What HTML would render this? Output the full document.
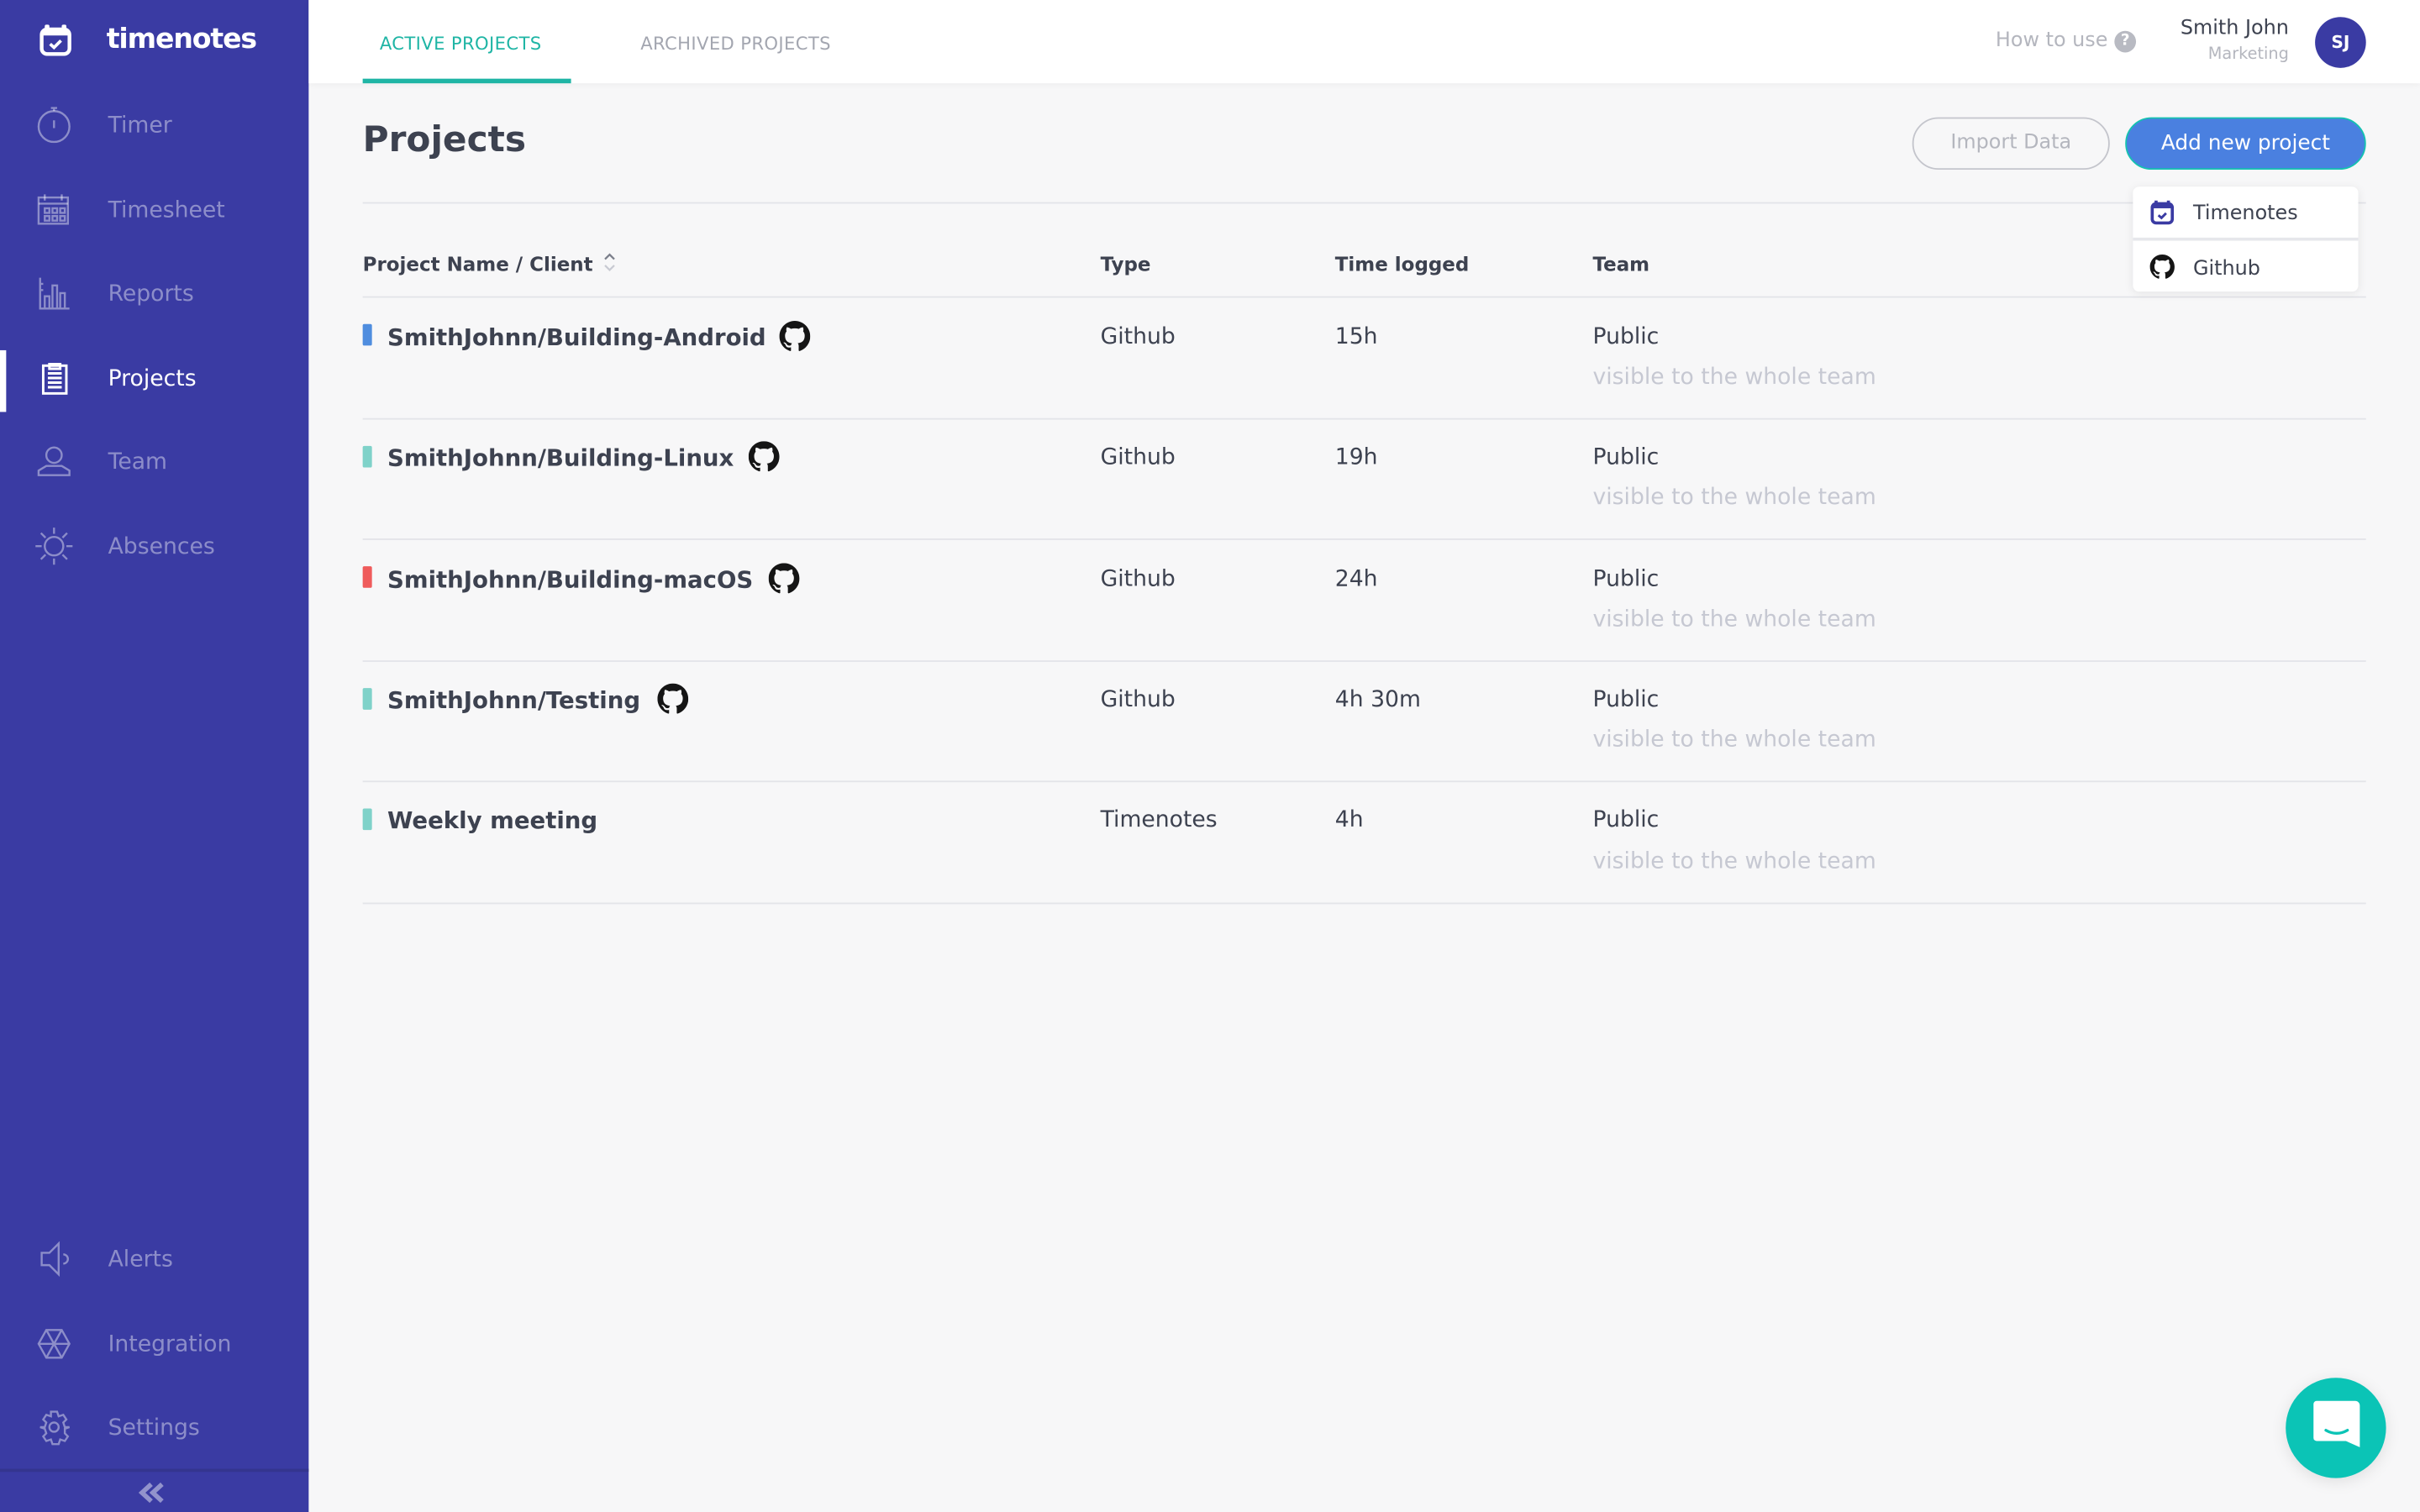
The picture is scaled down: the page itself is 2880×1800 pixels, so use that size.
<!DOCTYPE html>
<html><head><meta charset="utf-8"><style>
*{margin:0;padding:0;box-sizing:border-box}
html,body{width:2880px;height:1800px;overflow:hidden;background:#f7f7f8}
#w{position:absolute;left:0;top:0;width:1568px;height:980px;transform:scale(1.836735);transform-origin:0 0;font-family:"DejaVu Sans","Liberation Sans",sans-serif;color:#3d4250}
.a{position:absolute;white-space:nowrap}
#sb{position:absolute;left:0;top:0;width:200px;height:980px;background:#3a3ba3}
.nav{position:absolute;left:70px;font-size:14.5px;color:rgba(255,255,255,.42);transform:translateY(-45%)}
.ic{position:absolute;left:22px;width:26px;height:26px;transform:translateY(-50%)}
.ic *{stroke:rgba(255,255,255,.42);fill:none;stroke-width:1.3}
#top{position:absolute;left:200px;top:0;width:1368px;height:54px;background:#fff;box-shadow:0 1px 4px rgba(0,0,0,.05)}
.hd{font-size:12.5px;font-weight:bold;color:#3d4250;transform:translateY(-50%)}
.c{font-size:14.5px;transform:translateY(-45%)}
.nm{font-weight:bold;font-size:15px}
.sub{color:#c6c8d2}
.ln{position:absolute;left:235px;width:1298px;height:1px;background:#e3e4e9}
.bar{position:absolute;left:235px;width:6px;height:14px;border-radius:1px}
.gh{position:absolute;width:20px;height:20px}
</style></head><body><div id="w">
<div id="sb">
 <svg class="a" style="left:25px;top:15px" width="22" height="22" viewBox="0 0 22 22"><rect x="2" y="4" width="18" height="16" rx="3.5" fill="none" stroke="#fff" stroke-width="2.4"/><rect x="4" y="1" width="3" height="4" rx="1" fill="#fff"/><rect x="15" y="1" width="3" height="4" rx="1" fill="#fff"/><rect x="3" y="4" width="16" height="4" fill="#fff"/><path d="M7.5 13.5l2.5 2.3 4.5-4.5" stroke="#fff" stroke-width="2" fill="none"/></svg>
 <div class="a" style="left:69px;top:15px;font-size:18px;font-weight:bold;color:#fff;letter-spacing:-.6px">timenotes</div>
 <svg class="ic" style="top:81px" viewBox="0 0 26 26"><circle cx="13" cy="14" r="10"/><path d="M11 2h4M13 2v2M13 10v5"/></svg><div class="nav" style="top:81px">Timer</div>
 <svg class="ic" style="top:136px" viewBox="0 0 26 26"><rect x="3" y="5" width="19" height="17"/><path d="M3 9h19M7 3v4M18 3v4M7 12h3v3H7zM12 12h3v3h-3zM17 12h3v3h-3zM7 17h3v3H7zM12 17h3v3h-3zM17 17h3v3h-3z"/></svg><div class="nav" style="top:136px">Timesheet</div>
 <svg class="ic" style="top:190px" viewBox="0 0 26 26"><path d="M4 3v20h19M7 23V15h3v8M12 23V8h3v15M17 23V13h3v10M4 7h2M4 11h2"/></svg><div class="nav" style="top:190px">Reports</div>
 <div class="a" style="left:0;top:227px;width:4px;height:40px;background:#fff"></div>
 <svg class="ic" style="top:245px" viewBox="0 0 26 26"><rect x="6" y="5" width="15" height="18" style="stroke:#fff;stroke-width:1.6"/><path d="M10 4h7v3h-7zM9 10h9M9 13h9M9 16h9M9 19h9" style="stroke:#fff;stroke-width:1.6"/></svg><div class="nav" style="top:245px;color:#fff">Projects</div>
 <svg class="ic" style="top:299px" viewBox="0 0 26 26"><circle cx="13" cy="9" r="5"/><path d="M3 22v-3l5-3h10l5 3v3z"/></svg><div class="nav" style="top:299px">Team</div>
 <svg class="ic" style="top:354px" viewBox="0 0 26 26"><circle cx="13" cy="13" r="6"/><path d="M13 1v4M13 21v4M1 13h4M21 13h4M4.5 4.5l3 3M18.5 18.5l3 3M4.5 21.5l3-3M18.5 7.5l3-3"/></svg><div class="nav" style="top:354px">Absences</div>
 <svg class="ic" style="top:816px" viewBox="0 0 26 26"><path d="M5 9h5l6-6v20l-6-6H5zM19 10a3 3 0 0 1 0 6"/></svg><div class="nav" style="top:816px">Alerts</div>
 <svg class="ic" style="top:871px" viewBox="0 0 26 26"><path d="M8 4h10l5 9-5 9H8l-5-9zM8 4l10 18M18 4L8 22M3 13h20"/></svg><div class="nav" style="top:871px">Integration</div>
 <svg class="ic" style="top:925px" viewBox="0 0 26 26"><circle cx="13" cy="13" r="3"/><path d="M11 3h4l1 3 3-1 2 3-2 2 1 3h3v0l-3 1 0 3 2 2-2 3-3-1-1 3h-4l-1-3-3 1-2-3 2-2-1-3-3-1v0h3l1-3-2-2 2-3 3 1z"/></svg><div class="nav" style="top:925px">Settings</div>
 <div class="a" style="left:0;top:952px;width:200px;height:2px;background:#34358f"></div>
 <svg class="a" style="left:89px;top:960px" width="19" height="15" viewBox="0 0 19 15"><path d="M9 2L3 7.5 9 13M16 2l-6 5.5 6 5.5" stroke="rgba(255,255,255,.45)" stroke-width="3" fill="none"/></svg>
</div>
<div id="top"></div>
<div class="a" style="left:246px;top:21px;font-size:11.5px;color:#1fb5a5;letter-spacing:.2px">ACTIVE PROJECTS</div>
<div class="a" style="left:235px;top:51px;width:135px;height:3px;background:#1fb5a5"></div>
<div class="a" style="left:415px;top:21px;font-size:11.5px;color:#a3a6b0;letter-spacing:.2px">ARCHIVED PROJECTS</div>
<div class="a" style="left:1293px;top:19px;font-size:13px;color:#b4b6be">How to use</div>
<div class="a" style="left:1370px;top:20px;width:14px;height:14px;border-radius:50%;background:#b8bac2;color:#fff;font-size:10px;font-weight:bold;text-align:center;line-height:14px">?</div>
<div class="a" style="left:1400px;top:11px;width:83px;text-align:right;font-size:13px;color:#3d4250">Smith John</div>
<div class="a" style="left:1400px;top:29px;width:83px;text-align:right;font-size:10.5px;color:#b4b6be">Marketing</div>
<div class="a" style="left:1500px;top:11px;width:33px;height:33px;border-radius:50%;background:#3a3ba3;color:#fff;font-size:11px;font-weight:bold;text-align:center;line-height:33px">SJ</div>

<div class="a" style="left:235px;top:78px;font-size:23px;font-weight:bold;color:#3d4250">Projects</div>
<div class="a" style="left:1239px;top:76px;width:128px;height:34px;border:1.5px solid #c4c5cc;border-radius:17px;font-size:13px;color:#b4b6be;text-align:center;line-height:32px">Import Data</div>
<div class="a" style="left:1377px;top:76px;width:156px;height:34px;border:1.5px solid #14c2b0;border-radius:17px;background:#4a80e0;font-size:13.5px;color:#fff;text-align:center;line-height:32px">Add new project</div>
<div class="ln" style="top:131px"></div>

<div class="a hd" style="left:235px;top:171px">Project Name / Client</div>
<svg class="a" style="left:390px;top:163px" width="10" height="14" viewBox="0 0 10 14"><path d="M2 5l3-3 3 3" stroke="#7a7e8a" fill="none" stroke-width="1.2"/><path d="M2 9l3 3 3-3" stroke="#c8cad2" fill="none" stroke-width="1.2"/></svg>
<div class="a hd" style="left:713px;top:171px">Type</div>
<div class="a hd" style="left:865px;top:171px">Time logged</div>
<div class="a hd" style="left:1032px;top:171px">Team</div>
<div class="ln" style="top:192px"></div>

<div class="a" style="left:1382px;top:121px;width:146px;height:68px;background:#fff;border-radius:4px;box-shadow:0 1px 6px rgba(0,0,0,.08)"></div>
<div class="a" style="left:1382px;top:154px;width:146px;height:2px;background:#e6e7eb"></div>
<svg class="a" style="left:1393px;top:129px" width="16" height="17" viewBox="0 0 16 17"><rect x="1.5" y="3" width="13" height="12.5" rx="2.5" fill="none" stroke="#3a3ba3" stroke-width="2"/><rect x="1.5" y="3" width="13" height="3" fill="#3a3ba3"/><rect x="3" y="1" width="2" height="3" fill="#3a3ba3"/><rect x="11" y="1" width="2" height="3" fill="#3a3ba3"/><path d="M5.5 10.5l2 1.7 3-3" stroke="#3a3ba3" stroke-width="1.6" fill="none"/></svg>
<div class="a" style="left:1421px;top:131px;font-size:13px;color:#3d4250">Timenotes</div>
<svg class="a" style="left:1393px;top:165px" width="16" height="16" viewBox="0 0 16 16"><use href="#g"/></svg>
<div class="a" style="left:1421px;top:167px;font-size:13px;color:#3d4250">Github</div>

<div class="bar" style="top:210px;background:#4f8ddf"></div>
<div class="a c nm" style="left:251px;top:218px">SmithJohnn/Building-Android</div>
<svg class="gh" style="left:505px;top:208px" viewBox="0 0 16 16"><use href="#g"/></svg>
<div class="a c" style="left:713px;top:218px">Github</div><div class="a c" style="left:865px;top:218px">15h</div><div class="a c" style="left:1032px;top:218px">Public</div><div class="a c sub" style="left:1032px;top:244px">visible to the whole team</div>
<div class="ln" style="top:271px"></div>

<div class="bar" style="top:289px;background:#7fd2c9"></div>
<div class="a c nm" style="left:251px;top:296px">SmithJohnn/Building-Linux</div>
<svg class="gh" style="left:485px;top:286px" viewBox="0 0 16 16"><use href="#g"/></svg>
<div class="a c" style="left:713px;top:296px">Github</div><div class="a c" style="left:865px;top:296px">19h</div><div class="a c" style="left:1032px;top:296px">Public</div><div class="a c sub" style="left:1032px;top:322px">visible to the whole team</div>
<div class="ln" style="top:349px"></div>

<div class="bar" style="top:367px;background:#ef5b5b"></div>
<div class="a c nm" style="left:251px;top:375px">SmithJohnn/Building-macOS</div>
<svg class="gh" style="left:498px;top:365px" viewBox="0 0 16 16"><use href="#g"/></svg>
<div class="a c" style="left:713px;top:375px">Github</div><div class="a c" style="left:865px;top:375px">24h</div><div class="a c" style="left:1032px;top:375px">Public</div><div class="a c sub" style="left:1032px;top:401px">visible to the whole team</div>
<div class="ln" style="top:428px"></div>

<div class="bar" style="top:446px;background:#7fd2c9"></div>
<div class="a c nm" style="left:251px;top:453px">SmithJohnn/Testing</div>
<svg class="gh" style="left:426px;top:443px" viewBox="0 0 16 16"><use href="#g"/></svg>
<div class="a c" style="left:713px;top:453px">Github</div><div class="a c" style="left:865px;top:453px">4h 30m</div><div class="a c" style="left:1032px;top:453px">Public</div><div class="a c sub" style="left:1032px;top:479px">visible to the whole team</div>
<div class="ln" style="top:506px"></div>

<div class="bar" style="top:524px;background:#7fd2c9"></div>
<div class="a c nm" style="left:251px;top:531px">Weekly meeting</div>
<div class="a c" style="left:713px;top:531px">Timenotes</div><div class="a c" style="left:865px;top:531px">4h</div><div class="a c" style="left:1032px;top:531px">Public</div><div class="a c sub" style="left:1032px;top:558px">visible to the whole team</div>
<div class="ln" style="top:585px"></div>

<svg width="0" height="0" style="position:absolute"><defs><path id="g" fill="#151515" d="M8 0C3.58 0 0 3.58 0 8c0 3.54 2.29 6.53 5.47 7.59.4.07.55-.17.55-.38 0-.19-.01-.82-.01-1.49-2.01.37-2.53-.49-2.69-.94-.09-.23-.48-.94-.82-1.130-.28-.15-.68-.52-.01-.53.63-.01 1.08.58 1.23.82.72 1.21 1.87.87 2.33.66.07-.52.28-.87.51-1.07-1.78-.2-3.64-.89-3.64-3.95 0-.87.31-1.59.82-2.15-.08-.2-.36-1.02.08-2.12 0 0 .67-.21 2.2.82.64-.18 1.32-.27 2-.27.68 0 1.36.09 2 .27 1.53-1.04 2.2-.82 2.2-.82.44 1.1.16 1.92.08 2.12.51.56.82 1.27.82 2.15 0 3.07-1.87 3.75-3.65 3.95.29.25.54.73.54 1.48 0 1.07-.01 1.93-.01 2.2 0 .21.15.46.55.38A8.013 8.013 0 0016 8c0-4.42-3.58-8-8-8z"/></defs></svg>

<div class="a" style="left:1481px;top:893px;width:65px;height:65px;border-radius:50%;background:#0bc4b6;box-shadow:0 2px 10px rgba(0,0,0,.1)"></div>
<svg class="a" style="left:1496px;top:906px" width="36" height="38" viewBox="0 0 36 38"><path d="M5 2h25a3 3 0 0 1 3 3v27l-9-4H5a2 2 0 0 1-2-2V4a2 2 0 0 1 2-2z" fill="#fff"/><path d="M11 21q7 4 14 0" stroke="#0bc4b6" stroke-width="1.8" fill="none" stroke-linecap="round"/></svg>
</div></body></html>
